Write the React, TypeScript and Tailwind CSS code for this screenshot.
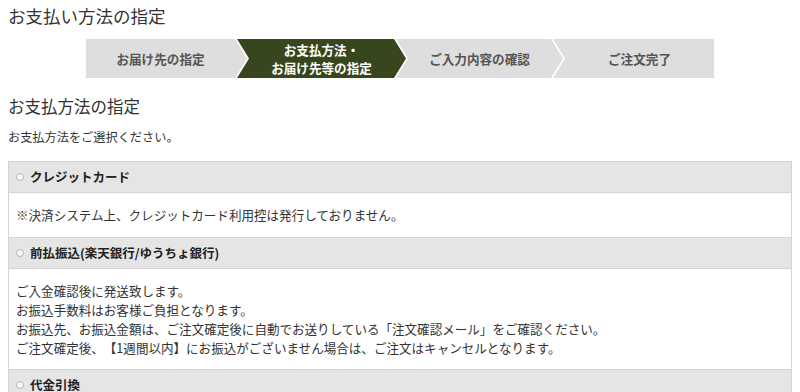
import React from "react";

const steps = [
  { lines: ["お届け先の指定"], active: false, width: "w-[161px]", first: true, last: false },
  { lines: ["お支払方法・", "お届け先等の指定"], active: true, width: "w-[169px]", first: false, last: false },
  { lines: ["ご入力内容の確認"], active: false, width: "w-[167px]", first: false, last: false },
  { lines: ["ご注文完了"], active: false, width: "w-[161px]", first: false, last: true },
];

function StepBar() {
  return (
    <div className="ml-[78px] mt-[11px] flex h-[39px]">
      {steps.map((s, i) => (
        <div
          key={i}
          className={[
            "flex shrink-0 flex-col items-center justify-center text-[12.6px] font-bold leading-[18px]",
            s.width,
            s.first ? "" : "-ml-[10px]",
            s.active ? "bg-[#38461e] text-white" : "bg-[#dedede] text-[#555]",
            s.first
              ? "[clip-path:polygon(0_0,calc(100%_-_12px)_0,100%_50%,calc(100%_-_12px)_100%,0_100%)] pr-[12px]"
              : s.last
                ? "[clip-path:polygon(0_0,100%_0,100%_100%,0_100%,12px_50%)] pl-[12px]"
                : "[clip-path:polygon(0_0,calc(100%_-_12px)_0,100%_50%,calc(100%_-_12px)_100%,0_100%,12px_50%)] px-[12px]",
          ].join(" ")}
        >
          {s.lines.map((l) => (
            <span key={l}>{l}</span>
          ))}
        </div>
      ))}
    </div>
  );
}

function MethodHeader({ label }: { label: string }) {
  return (
    <div className="flex h-[31px] items-center border-b border-[#d4d4d4] bg-[#e5e5e5] pl-[7px]">
      <span className="h-[8px] w-[8px] rounded-full border border-[#b5b5b5] bg-[#f7f7f7]" />
      <span className="ml-[6px] text-[12.5px] font-bold text-[#222]">{label}</span>
    </div>
  );
}

export default function App() {
  return (
    <div
      className="min-h-[392px] bg-white px-[8px] text-[#333] [text-spacing-trim:space-all]"
      style={{ fontFamily: '"Noto Sans CJK JP", "Noto Sans", sans-serif' }}
    >
      <h1 className="pt-[4px] text-[17.5px] font-normal leading-[24px]">お支払い方法の指定</h1>
      <StepBar />
      <h2 className="mt-[16px] text-[16.5px] font-normal leading-[24px]">お支払方法の指定</h2>
      <p className="mt-[10px] text-[12.2px] leading-[18px]">お支払方法をご選択ください。</p>
      <div className="mt-[15px] border border-[#d4d4d4]">
        <MethodHeader label="クレジットカード" />
        <div className="border-b border-[#d4d4d4] bg-white pb-[12px] pl-[7px] pt-[12px] text-[12.55px] leading-[20px]">
          ※決済システム上、クレジットカード利用控は発行しておりません。
        </div>
        <MethodHeader label="前払振込(楽天銀行/ゆうちょ銀行)" />
        <div className="border-b border-[#d4d4d4] bg-white py-[12px] pl-[7px] text-[12.55px] leading-[19px]">
          <p>ご入金確認後に発送致します。</p>
          <p>お振込手数料はお客様ご負担となります。</p>
          <p>お振込先、お振込金額は、ご注文確定後に自動でお送りしている「注文確認メール」をご確認ください。</p>
          <p>ご注文確定後、【1週間以内】にお振込がございません場合は、ご注文はキャンセルとなります。</p>
        </div>
        <MethodHeader label="代金引換" />
      </div>
    </div>
  );
}
